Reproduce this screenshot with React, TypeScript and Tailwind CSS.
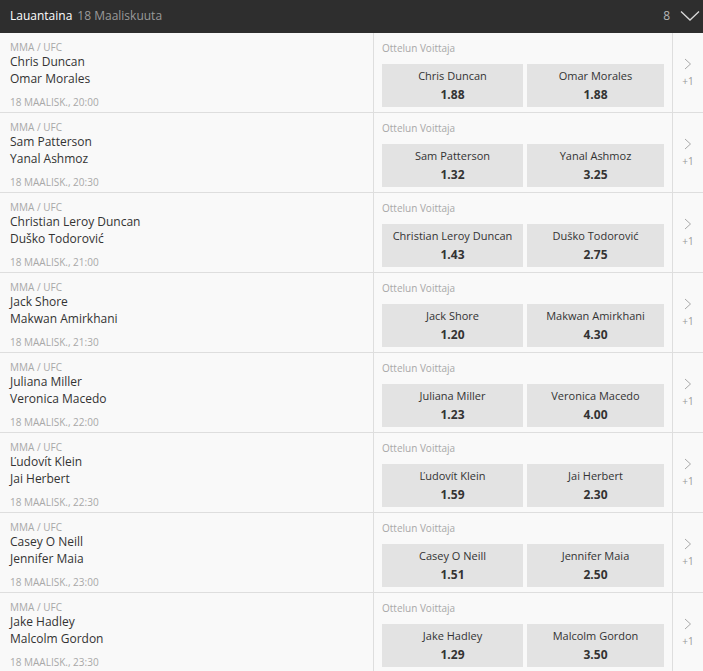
const events = [
  { home: 'Chris Duncan', away: 'Omar Morales', time: '20:00', h: '1.88', a: '1.88' },
  { home: 'Sam Patterson', away: 'Yanal Ashmoz', time: '20:30', h: '1.32', a: '3.25' },
  { home: 'Christian Leroy Duncan', away: 'Duško Todorović', time: '21:00', h: '1.43', a: '2.75' },
  { home: 'Jack Shore', away: 'Makwan Amirkhani', time: '21:30', h: '1.20', a: '4.30' },
  { home: 'Juliana Miller', away: 'Veronica Macedo', time: '22:00', h: '1.23', a: '4.00' },
  { home: 'Ľudovít Klein', away: 'Jai Herbert', time: '22:30', h: '1.59', a: '2.30' },
  { home: 'Casey O Neill', away: 'Jennifer Maia', time: '23:00', h: '1.51', a: '2.50' },
  { home: 'Jake Hadley', away: 'Malcolm Gordon', time: '23:30', h: '1.29', a: '3.50' },
]

function OddsButton({ name, price }: { name: string; price: string }) {
  return (
    <button className="flex h-[43px] flex-col items-center justify-center bg-[#e3e3e3] text-[#333]">
      <span className="text-[11px] leading-[14px]">{name}</span>
      <span className="mt-[5px] text-[12px] font-bold leading-[14px]">{price}</span>
    </button>
  )
}

export default function App() {
  return (
    <div className="w-[703px] bg-[#f9f9f9] font-['Open_Sans',sans-serif]">
      {/* header */}
      <div className="flex h-[33px] items-center justify-between bg-[#2e2e2e] pb-[2px] pl-[10px] pr-[3px]">
        <div className="text-[12px]">
          <span className="text-white">Lauantaina</span>
          <span className="ml-[5px] text-[#9a9a9a]">18 Maaliskuuta</span>
        </div>
        <div className="flex items-center">
          <span className="text-[12px] text-[#b5b5b5]">8</span>
          <svg className="ml-[10px]" width="20" height="12" viewBox="0 0 20 12">
            <path d="M1 1.5 L10 10 L19 1.5" fill="none" stroke="#d8d8d8" strokeWidth="1.3" />
          </svg>
        </div>
      </div>

      {events.map((e) => (
        <div key={e.home} className="flex h-[80px] border-b border-[#dedede]">
          <div className="flex w-[374px] flex-col border-r border-[#dedede] pl-[10px] pt-[8px]">
            <span className="text-[10px] leading-[12px] text-[#a8a8a8]">MMA / UFC</span>
            <span className="text-[12px] leading-[17px] text-[#333]">{e.home}</span>
            <span className="text-[12px] leading-[17px] text-[#333]">{e.away}</span>
            <span className="mt-[9px] text-[10px] leading-[12px] text-[#a8a8a8]">
              18 MAALISK., {e.time}
            </span>
          </div>
          <div className="flex w-[299px] flex-col border-r border-[#dedede] pl-[8px] pr-[8px] pt-[9px]">
            <span className="text-[10px] leading-[12px] text-[#a8a8a8]">Ottelun Voittaja</span>
            <div className="mt-[10px] grid grid-cols-[141px_137px] gap-[4px]">
              <OddsButton name={e.home} price={e.h} />
              <OddsButton name={e.away} price={e.a} />
            </div>
          </div>
          <div className="flex flex-1 flex-col items-center pt-[25px]">
            <svg width="8" height="12" viewBox="0 0 8 12">
              <path d="M1 1 L6.5 6 L1 11" fill="none" stroke="#a8a8a8" strokeWidth="1" />
            </svg>
            <span className="mt-[5px] text-[10px] leading-[12px] text-[#999]">+1</span>
          </div>
        </div>
      ))}
    </div>
  )
}
